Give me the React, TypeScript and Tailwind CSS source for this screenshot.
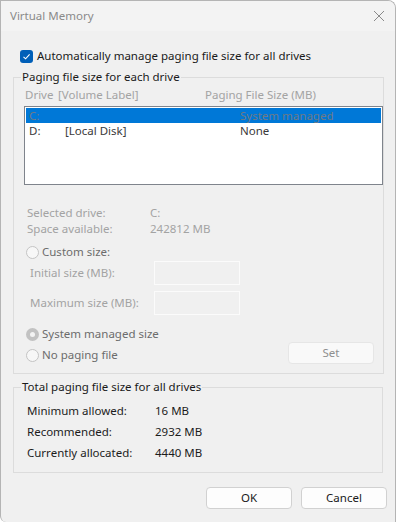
import React from 'react';

const font = { fontFamily: '"Noto Sans", "Liberation Sans", sans-serif' };

const Radio = ({ checked }: { checked?: boolean }) =>
    checked ? (
        <span className="w-[13px] h-[13px] rounded-full bg-[#c2c2c2] flex items-center justify-center shrink-0">
            <span className="w-[5px] h-[5px] rounded-full bg-[#f3f3f3]" />
        </span>
    ) : (
        <span className="w-[13px] h-[13px] rounded-full border border-[#c4c4c4] bg-[#f7f7f7] shrink-0" />
    );

const TotalRow = ({ label, value }: { label: string; value: string }) => (
    <div className="flex h-[21px] items-center text-[#1c1c1c]">
        <span className="w-[128px]">{label}</span>
        <span>{value}</span>
    </div>
);

export default function App() {
    return (
        <div className="w-[396px] h-[523px] bg-white text-[11.5px] leading-[14px]" style={font}>
            <div className="w-[396px] h-[522px] border border-b-0 border-[#b4b4b4] rounded-tr-[8px] rounded-bl-[6px] overflow-hidden flex flex-col bg-[#f0f0f0]">
                {/* title bar */}
                <div className="h-[30px] bg-[#f3f3f3] flex items-center justify-between pl-[9px] pr-[9px] shrink-0">
                    <span className="text-[#8a8a8a]">Virtual Memory</span>
                    <svg width="12" height="12" viewBox="0 0 12 12" className="mr-[1px]">
                        <path d="M1 1 L11 11 M11 1 L1 11" stroke="#8a8a8a" strokeWidth="1" fill="none" />
                    </svg>
                </div>

                <div className="flex-1 pl-[12px] pr-[12px] pt-[18px]">
                    {/* auto manage checkbox */}
                    <div className="flex items-center gap-[4px] h-[14px] pl-[7px] text-[#1a1a1a]">
                        <span className="w-[13px] h-[13px] rounded-[3px] bg-[#005fb8] flex items-center justify-center">
                            <svg width="9" height="9" viewBox="0 0 9 9">
                                <path d="M1.5 4.8 L3.6 6.8 L7.6 2.4" stroke="white" strokeWidth="1.1" fill="none" />
                            </svg>
                        </span>
                        <span>Automatically manage paging file size for all drives</span>
                    </div>

                    {/* paging file size for each drive */}
                    <fieldset className="mt-[7px] border border-[#dcdcdc] w-[370px] h-[304px] pb-0">
                        <legend className="ml-[7px] px-[1px] text-[#1a1a1a] leading-[14px]">Paging file size for each drive</legend>
                        <div className="flex mt-[4px] pl-[11px] text-[#a3a3a3]">
                            <span className="w-[33px]">Drive</span>
                            <span className="w-[147px]">[Volume Label]</span>
                            <span>Paging File Size (MB)</span>
                        </div>
                        <div className="mt-[4px] ml-[10px] w-[359px] h-[79px] border border-[#7f848c] bg-white p-[1px]">
                            <div className="flex h-[15px] items-center bg-[#0078d7] text-[#6e7a86] pl-[3px]">
                                <span className="w-[211px]">C:</span>
                                <span>System managed</span>
                            </div>
                            <div className="flex h-[15px] items-center text-[#3a3a3a] pl-[3px]">
                                <span className="w-[36px]">D:</span>
                                <span className="w-[175px]">[Local Disk]</span>
                                <span>None</span>
                            </div>
                        </div>

                        <div className="mt-[20px] pl-[13px] text-[#a3a3a3] leading-[16px]">
                            <div className="flex">
                                <span className="w-[123px]">Selected drive:</span>
                                <span>C:</span>
                            </div>
                            <div className="flex">
                                <span className="w-[123px]">Space available:</span>
                                <span>242812 MB</span>
                            </div>
                        </div>

                        <div className="mt-[8px] pl-[12px] flex items-center gap-[3px] h-[14px] text-[#6c6c6c]">
                            <Radio />
                            <span>Custom size:</span>
                        </div>
                        <div className="mt-[2px] pl-[16px] flex items-center h-[24px] text-[#a3a3a3]">
                            <span className="w-[124px]">Initial size (MB):</span>
                            <span className="w-[86px] h-[24px] border border-[#fbfbfb]" />
                        </div>
                        <div className="mt-[6px] pl-[16px] flex items-center h-[24px] text-[#a3a3a3]">
                            <span className="w-[124px]">Maximum size (MB):</span>
                            <span className="w-[86px] h-[24px] border border-[#fbfbfb]" />
                        </div>

                        <div className="mt-[12px] pl-[12px] flex items-center gap-[3px] h-[14px] text-[#6c6c6c]">
                            <Radio checked />
                            <span>System managed size</span>
                        </div>
                        <div className="pl-[12px] pr-[9px] flex items-center justify-between h-[22px] mt-[1px]">
                            <div className="flex items-center gap-[3px] text-[#6c6c6c] mt-[4px]">
                                <Radio />
                                <span>No paging file</span>
                            </div>
                            <button className="w-[86px] h-[22px] rounded-[4px] border border-[#e6e6e6] bg-[#f9f9f9] text-[#8f8f8f]">Set</button>
                        </div>
                    </fieldset>

                    {/* totals */}
                    <fieldset className="mt-[6px] border border-[#dcdcdc] w-[370px] h-[93px]">
                        <legend className="ml-[7px] px-[1px] text-[#1a1a1a] leading-[14px]">Total paging file size for all drives</legend>
                        <div className="mt-[6px] pl-[13px]">
                            <TotalRow label="Minimum allowed:" value="16 MB" />
                            <TotalRow label="Recommended:" value="2932 MB" />
                            <TotalRow label="Currently allocated:" value="4440 MB" />
                        </div>
                    </fieldset>

                    <div className="flex justify-end gap-[9px] mt-[14px] mr-[-4px]">
                        <button className="w-[86px] h-[22px] rounded-[4px] border border-[#d1d1d1] bg-[#fdfdfd] text-[#1a1a1a]">OK</button>
                        <button className="w-[86px] h-[22px] rounded-[4px] border border-[#d1d1d1] bg-[#fdfdfd] text-[#1a1a1a]">Cancel</button>
                    </div>
                </div>
            </div>
        </div>
    );
}
